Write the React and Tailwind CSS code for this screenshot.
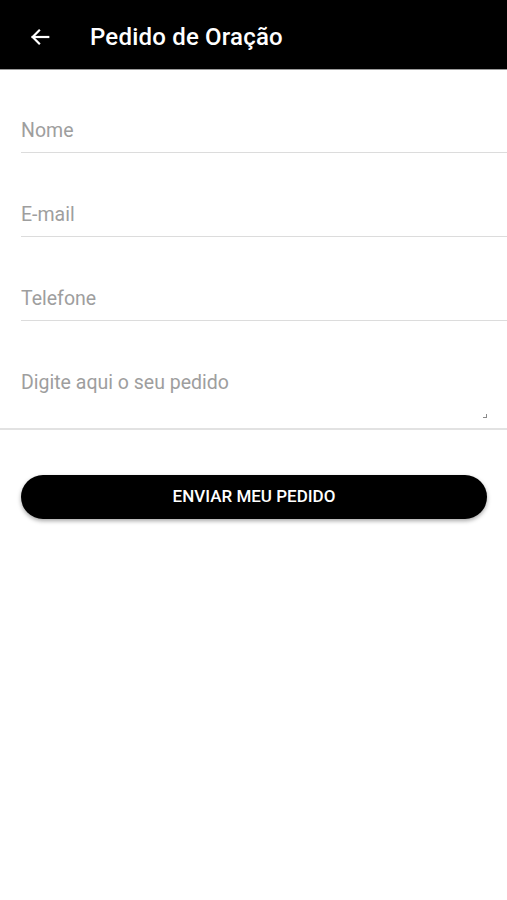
import React from "react";

function App() {
  return (
    <div className="min-h-[900px] bg-white font-['Roboto',sans-serif]">
      <header className="h-[70px] bg-black border-b border-[#9a9a9a] flex items-center pt-[4px]">
        <button className="ml-[28px] w-[24px] h-[24px] flex items-center justify-center text-white">
          <svg width="22" height="22" viewBox="0 0 24 24" fill="none" stroke="currentColor" strokeWidth="2.4" strokeLinecap="square">
            <path d="M21 12H4" />
            <path d="M11 5l-7 7 7 7" />
          </svg>
        </button>
        <h1 className="ml-[38px] text-white text-[24px] font-medium tracking-[0.2px]">
          Pedido de Oração
        </h1>
      </header>

      <form className="pt-[38px]">
        <div className="pl-[21px]">
          <input
            type="text"
            placeholder="Nome"
            className="w-full h-[45px] border-b border-[#dcdcdc] text-[19.5px] outline-none placeholder:text-[#9e9e9e]"
          />
        </div>
        <div className="pl-[21px] mt-[40px]">
          <input
            type="email"
            placeholder="E-mail"
            className="w-full h-[44px] border-b border-[#dcdcdc] text-[19.5px] outline-none placeholder:text-[#9e9e9e]"
          />
        </div>
        <div className="pl-[21px] mt-[40px]">
          <input
            type="tel"
            placeholder="Telefone"
            className="w-full h-[44px] border-b border-[#dcdcdc] text-[19.5px] outline-none placeholder:text-[#9e9e9e]"
          />
        </div>
        <div className="mt-[40px] relative">
          <textarea
            placeholder="Digite aqui o seu pedido"
            className="block w-full h-[69px] pl-[21px] pr-[20px] pt-[9px] border-b-2 border-[#e2e2e2] text-[19.5px] leading-[26px] outline-none resize-none placeholder:text-[#9e9e9e]"
          ></textarea>
          <span className="absolute right-[20px] bottom-[12px] w-[4px] h-[4px] border-r border-b border-[#8a8a8a]"></span>
        </div>

        <div className="pl-[21px] pr-[20px] mt-[45px]">
          <button
            type="submit"
            className="w-full h-[44px] rounded-full bg-black text-white text-[17px] font-medium shadow-[0_2px_4px_rgba(0,0,0,0.35)]"
          >
            ENVIAR MEU PEDIDO
          </button>
        </div>
      </form>
    </div>
  );
}

export default App;
